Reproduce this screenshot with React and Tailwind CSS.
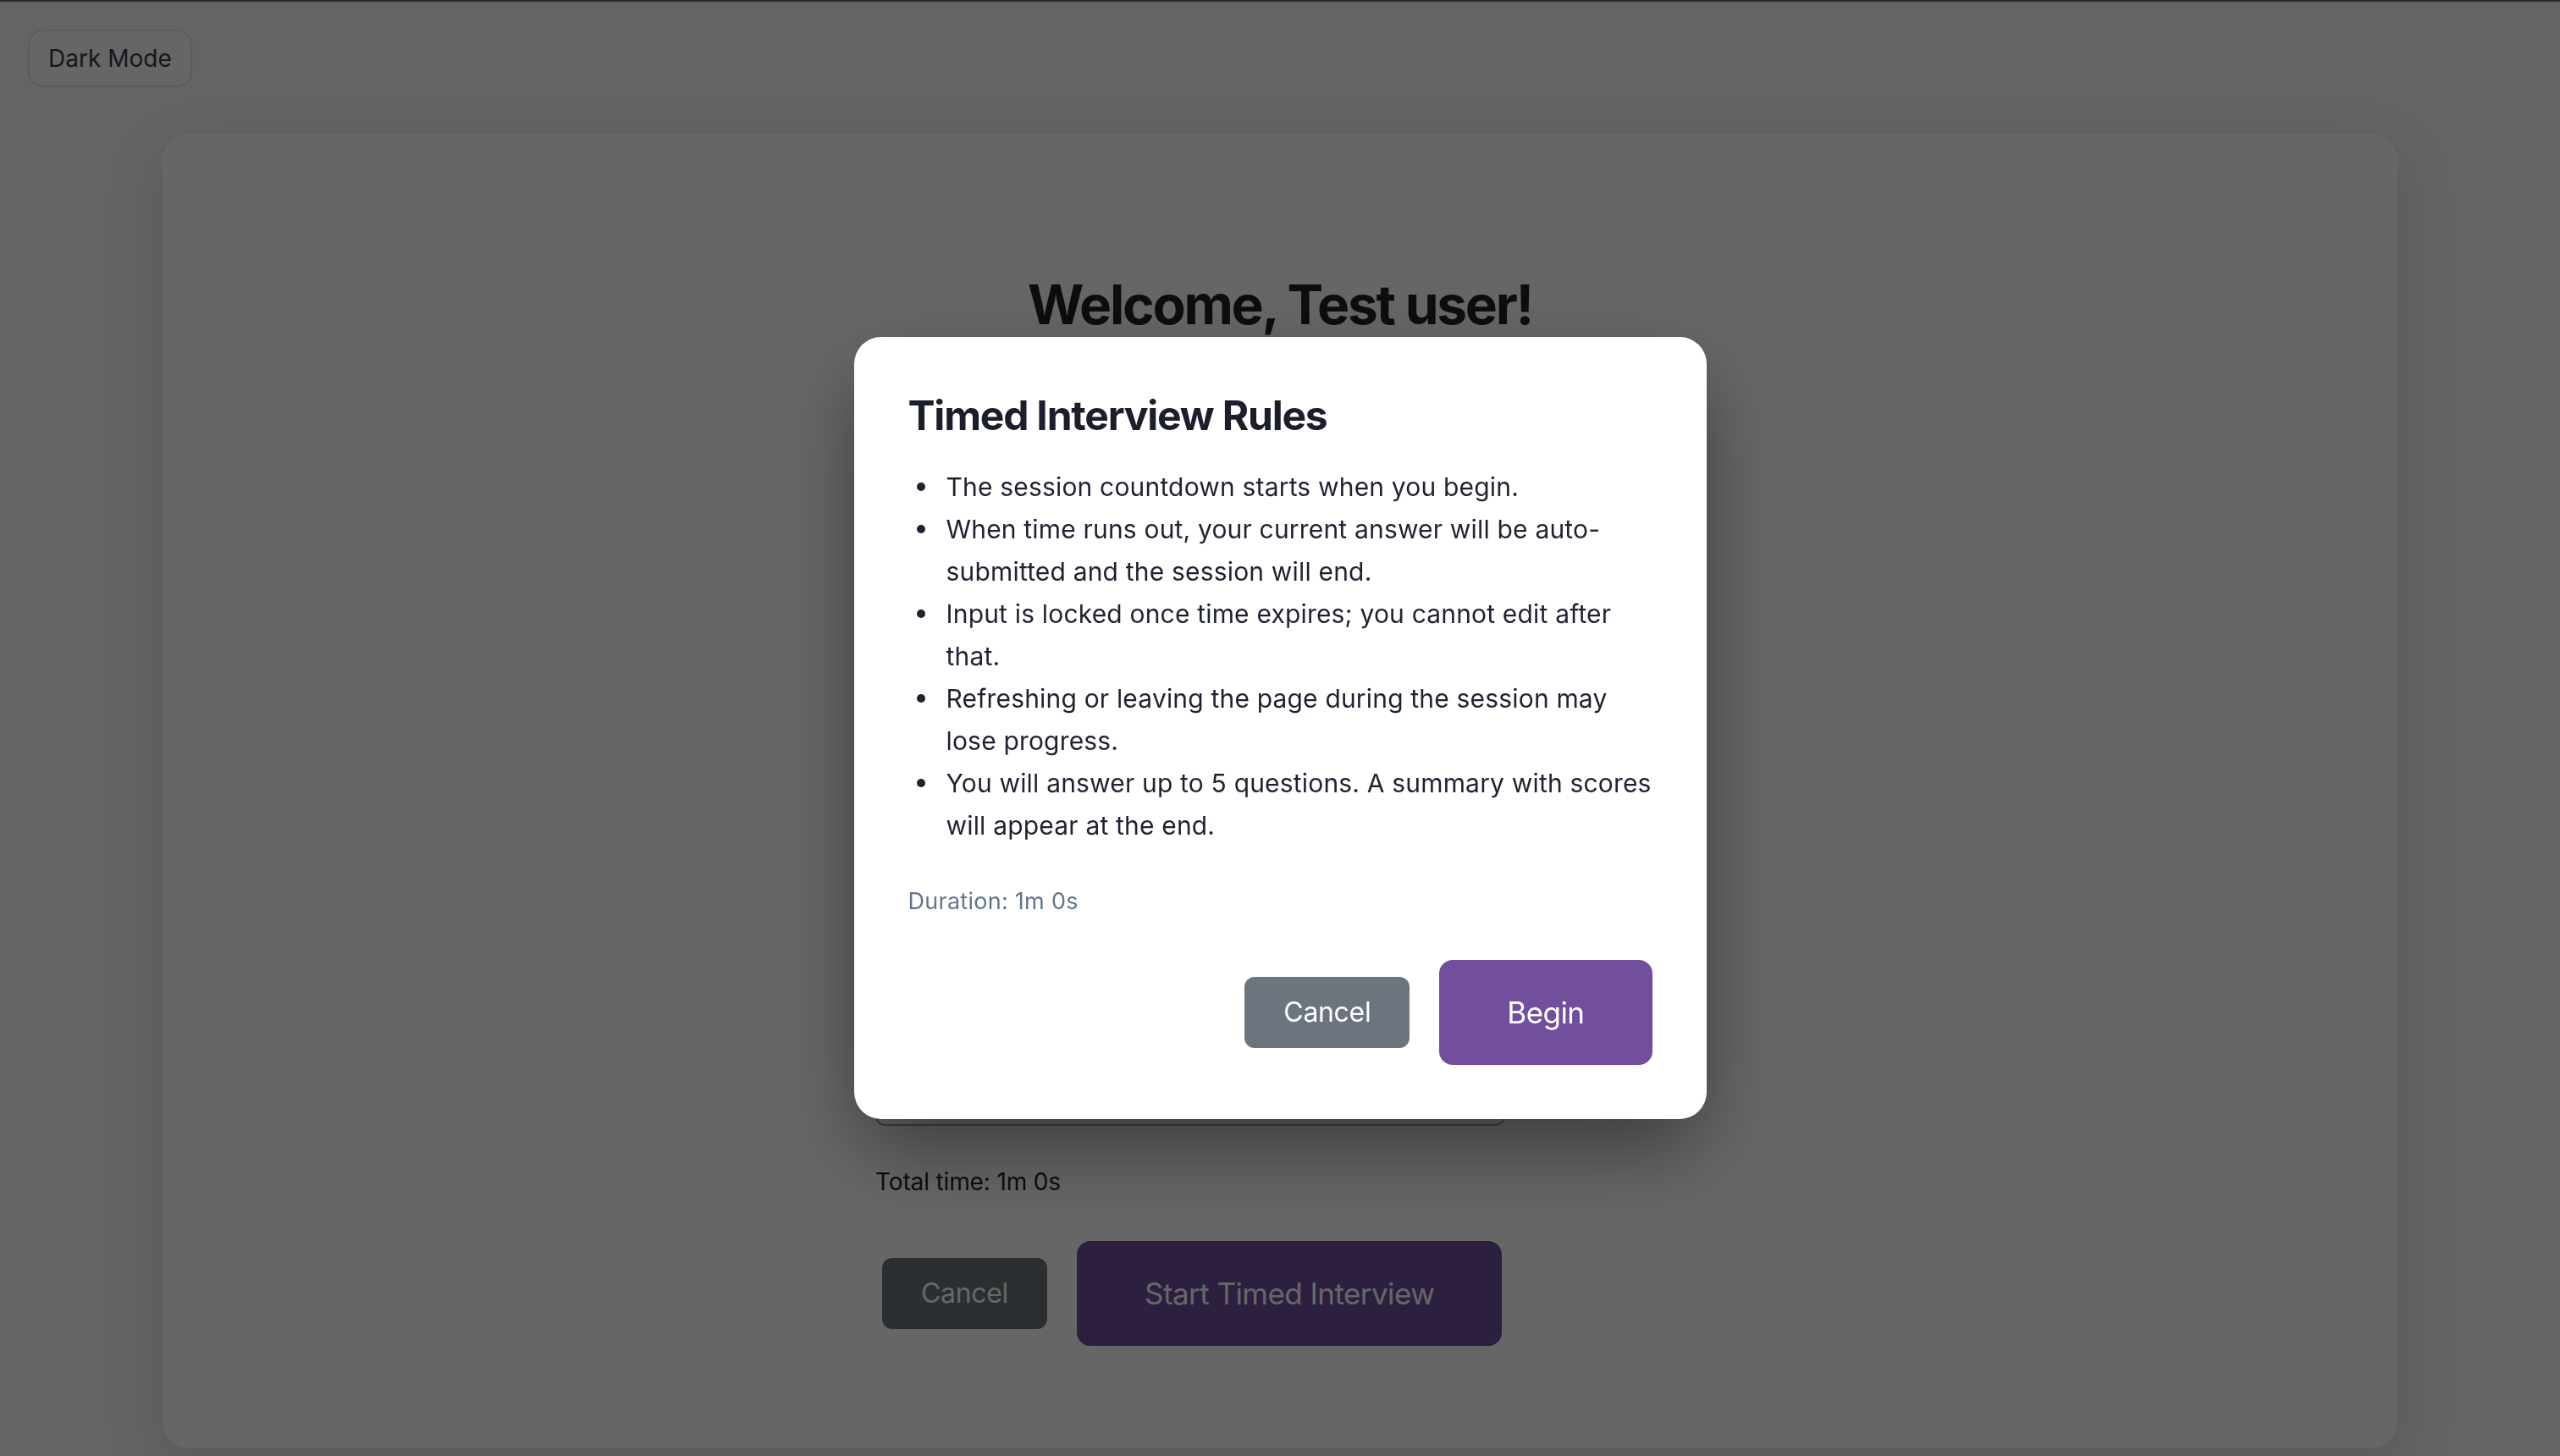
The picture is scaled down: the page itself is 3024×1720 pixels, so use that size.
import React from "react";

function Btn({ kind, children, className = "" }) {
  const base =
    kind === "primary"
      ? "bg-[#714f9d] text-white text-[35px] leading-[52px] px-[80px] py-[36px] rounded-[16px] tracking-[-0.016em]"
      : "bg-[#6c757d] text-white text-[32px] leading-[48px] px-[46px] py-[18px] rounded-[12px] tracking-[-0.01em]";
  return (
    <button className={`${base} font-['Inter',sans-serif] ${className}`}>{children}</button>
  );
}

function Item({ children }) {
  return (
    <li className="flex">
      <span className="flex h-[50px] w-[45px] shrink-0 items-center pl-[10px]">
        <span className="h-[10px] w-[10px] rounded-full bg-[#1f2230]" />
      </span>
      <span className="flex-1 whitespace-nowrap">{children}</span>
    </li>
  );
}

export default function App() {
  return (
    <div className="relative min-h-screen w-full bg-[#f7f9fd] font-['Inter',sans-serif] text-[#222]">
      <div className="h-[2px] w-full bg-[#6b6e76]" />
      <div className="pt-[33px] pl-[33px]">
        <button className="rounded-[18px] border-2 border-[#e4e6ec] bg-white px-[22px] py-[11px] text-[28px] leading-[42px] text-[#3a3b44]">
          Dark Mode
        </button>
      </div>

      <div className="mx-auto mt-[55px] w-[2640px] rounded-[32px] bg-white pt-[163px] pb-[121px] shadow-[0_20px_70px_rgba(0,0,0,0.12)]">
        <h1 className="text-center text-[64px] font-bold leading-[77px] tracking-[-0.035em] text-[#222]">
          Welcome, Test user!
        </h1>
        <div className="mx-auto w-[956px]">
          <div className="mt-[80px] flex w-[744px] flex-col gap-[40px]">
            <div className="h-[90px] rounded-[12px] border-2 border-[#9ca3af]" />
            <div className="h-[90px] rounded-[12px] border-2 border-[#9ca3af]" />
            <div className="h-[90px] rounded-[12px] border-2 border-[#9ca3af]" />
            <div className="h-[90px] rounded-[12px] border-2 border-[#9ca3af]" />
            <div className="h-[332px] rounded-[12px] border-2 border-[#9ca3af]" />
          </div>

          <p className="mt-[45px] text-[28px] leading-[42px] tracking-[-0.005em] text-[#222]">Total time: 1m 0s</p>

          <div className="mt-[49px] ml-[8px] flex items-center gap-[35px]">
            <Btn kind="secondary">Cancel</Btn>
            <Btn kind="primary">Start Timed Interview</Btn>
          </div>
        </div>
      </div>

      <div className="fixed inset-0 flex items-center justify-center bg-black/60">
        <div className="w-[1007px] rounded-[32px] bg-white p-[64px] shadow-[0_40px_100px_-10px_rgba(0,0,0,0.45)]">
          <h2 className="text-[48px] font-bold leading-[58px] tracking-[-0.025em] text-[#1c1f2b]">
            Timed Interview Rules
          </h2>
          <ul className="mt-[30px] text-[30px] leading-[50px] tracking-[0.006em] text-[#1f2230]">
            <Item>The session countdown starts when you begin.</Item>
            <Item>
              When time runs out, your current answer will be auto-
              <br />
              submitted and the session will end.
            </Item>
            <Item>
              Input is locked once time expires; you cannot edit after
              <br />
              that.
            </Item>
            <Item>
              Refreshing or leaving the page during the session may
              <br />
              lose progress.
            </Item>
            <Item>
              You will answer up to 5 questions. A summary with scores
              <br />
              will appear at the end.
            </Item>
          </ul>
          <p className="mt-[45px] text-[27px] leading-[39px] tracking-[0.01em] text-[#64748b]">Duration: 1m 0s</p>
          <div className="mt-[50px] flex items-center justify-end gap-[35px]">
            <Btn kind="secondary">Cancel</Btn>
            <Btn kind="primary">Begin</Btn>
          </div>
        </div>
      </div>
    </div>
  );
}
